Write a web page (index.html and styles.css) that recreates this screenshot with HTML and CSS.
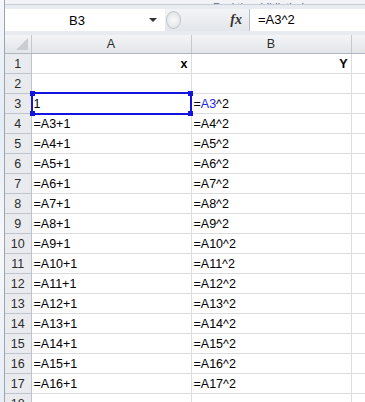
FILE: index.html
```html
<!DOCTYPE html>
<html lang="de">
<head>
    <meta charset="UTF-8">
    <title>Mappe1 - Excel</title>
    <link rel="stylesheet" href="styles.css">
</head>
<body>

<div class="window">
    <div class="frame"></div>
    <div class="main">
        <div class="ribbon-edge"><span>Funktionsbibliothek</span></div>

        <div class="formula-bar">
            <div class="name-box">
                <span class="name">B3</span>
                <span class="arrow"></span>
            </div>
            <div class="controls">
                <span class="grip"></span>
                <span class="fx">fx</span>
            </div>
            <div class="formula">=A3^2</div>
        </div>

        <table class="sheet">
            <colgroup>
                <col class="c-head">
                <col class="c-a">
                <col class="c-b">
                <col class="c-c">
            </colgroup>
            <thead>
                <tr>
                    <th class="corner"><span class="tri"></span></th>
                    <th>A</th>
                    <th>B</th>
                    <th></th>
                </tr>
            </thead>
            <tbody>
                <tr><th>1</th><td class="bold right">x</td><td class="bold right">Y</td><td></td></tr>
                <tr><th>2</th><td></td><td></td><td></td></tr>
                <tr>
                    <th>3</th>
                    <td class="ref-cell">1
                        <div class="ref">
                            <span class="h tl"></span><span class="h tr"></span>
                            <span class="h bl"></span><span class="h br"></span>
                        </div>
                    </td>
                    <td>=<span class="blue">A3</span>^2</td>
                    <td></td>
                </tr>
                <tr><th>4</th><td>=A3+1</td><td>=A4^2</td><td></td></tr>
                <tr><th>5</th><td>=A4+1</td><td>=A5^2</td><td></td></tr>
                <tr><th>6</th><td>=A5+1</td><td>=A6^2</td><td></td></tr>
                <tr><th>7</th><td>=A6+1</td><td>=A7^2</td><td></td></tr>
                <tr><th>8</th><td>=A7+1</td><td>=A8^2</td><td></td></tr>
                <tr><th>9</th><td>=A8+1</td><td>=A9^2</td><td></td></tr>
                <tr><th>10</th><td>=A9+1</td><td>=A10^2</td><td></td></tr>
                <tr><th>11</th><td>=A10+1</td><td>=A11^2</td><td></td></tr>
                <tr><th>12</th><td>=A11+1</td><td>=A12^2</td><td></td></tr>
                <tr><th>13</th><td>=A12+1</td><td>=A13^2</td><td></td></tr>
                <tr><th>14</th><td>=A13+1</td><td>=A14^2</td><td></td></tr>
                <tr><th>15</th><td>=A14+1</td><td>=A15^2</td><td></td></tr>
                <tr><th>16</th><td>=A15+1</td><td>=A16^2</td><td></td></tr>
                <tr><th>17</th><td>=A16+1</td><td>=A17^2</td><td></td></tr>
                <tr><th>18</th><td></td><td></td><td></td></tr>
            </tbody>
        </table>
    </div>
</div>

</body>
</html>
```

FILE: styles.css
```css
body {
    margin: 0;
    font-family: "Liberation Sans", Arial, sans-serif;
    font-size: 12.5px;
    color: #000;
    background: #fff;
    overflow: hidden;
}
.window {
    display: flex;
    height: 402px;
    overflow: hidden;
}
.frame {
    width: 4px;
    flex: none;
    background: linear-gradient(#f4f7fb, #e4ecf6 30%, #f6f8fb 60%, #e8eef7);
    border-right: 1px solid #9ea4ab;
}
.main {
    flex: 1;
    min-width: 0;
}
.ribbon-edge {
    height: 4px;
    overflow: hidden;
    background: #f1f3f6;
    border-bottom: 1px solid #c6ccd4;
    text-align: center;
    padding-left: 150px;
}
.ribbon-edge span {
    display: inline-block;
    margin-top: -10px;
    font-size: 11px;
    line-height: 13px;
    color: #5a6a80;
}
.formula-bar {
    display: flex;
    height: 22px;
    padding: 4px 0 4px;
    background: #e8ebef;
}
.name-box {
    width: 160px;
    flex: none;
    background: #fff;
    display: flex;
    align-items: center;
}
.name {
    flex: 1;
    text-align: center;
    font-size: 13px;
}
.arrow {
    width: 0;
    height: 0;
    margin-right: 8px;
    border-left: 4px solid transparent;
    border-right: 4px solid transparent;
    border-top: 4px solid #333;
}
.controls {
    width: 84px;
    flex: none;
    display: flex;
    align-items: center;
    justify-content: space-between;
    background: linear-gradient(#f3f4f6, #e3e6ea);
    border-right: 1px solid #b5bcc5;
}
.grip {
    width: 13px;
    height: 16px;
    margin-left: 1px;
    border-radius: 50%;
    background: radial-gradient(circle at 50% 50%, #fafafa, #dcdfe3);
    border: 1px solid #bfc5cc;
}
.fx {
    margin-right: 7px;
    font-family: "Liberation Serif", serif;
    font-style: italic;
    font-weight: bold;
    font-size: 14px;
    color: #333;
}
.formula {
    flex: 1;
    background: #fff;
    padding-left: 8px;
    line-height: 22px;
    font-size: 13px;
    white-space: nowrap;
}
.sheet {
    border-collapse: collapse;
    table-layout: fixed;
    width: 380px;
}
.c-head { width: 26px; }
.c-a { width: 160px; }
.c-b { width: 160px; }
.c-c { width: 34px; }
th {
    height: 19px;
    padding: 0;
    font-weight: normal;
    color: #2c2c2c;
    background: #e9ebee;
    border: 1px solid #bec4cb;
    text-align: center;
}
thead th {
    height: 18px;
    border-top: 0;
    background: linear-gradient(#f3f4f6, #e2e5e9);
    border-color: #c4c9cf;
    border-bottom-color: #b0b7c0;
}
tbody th {
    border-left: 0;
}
thead th.corner {
    border-left: 0;
    position: relative;
}
.tri {
    position: absolute;
    right: 3px;
    bottom: 3px;
    width: 0;
    height: 0;
    border-left: 12px solid transparent;
    border-bottom: 12px solid #c9ccd0;
}
td {
    height: 19px;
    padding: 0 2px;
    border: 1px solid #dadcdd;
    white-space: nowrap;
    overflow: hidden;
}
.right { text-align: right; padding-right: 3px; }
.bold { font-weight: bold; }
.blue { color: #2525e6; }
.ref-cell {
    position: relative;
    overflow: visible;
}
.ref {
    position: absolute;
    left: -1px;
    top: -2px;
    right: -1px;
    bottom: -2px;
    border: 2px solid #1414e0;
}
.h {
    position: absolute;
    width: 5px;
    height: 5px;
    background: #1414e0;
}
.tl { left: -3px; top: -3px; }
.tr { right: -3px; top: -3px; }
.bl { left: -3px; bottom: -3px; }
.br { right: -3px; bottom: -3px; }
```
